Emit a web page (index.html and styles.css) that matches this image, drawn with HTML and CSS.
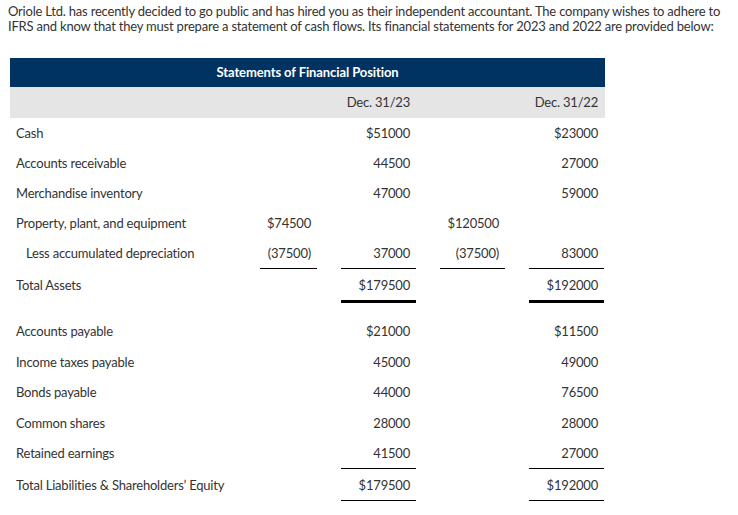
FILE: index.html
```html
<!DOCTYPE html>
<html>
<head>
<meta charset="utf-8">
<link rel="stylesheet" href="styles.css">
</head>
<body>
<p class="intro">Oriole Ltd. has recently decided to go public and has hired you as their independent accountant. The company wishes to adhere to IFRS and know that they must prepare a statement of cash flows. Its financial statements for 2023 and 2022 are provided below:</p>
<div class="sheet">
  <div class="title">Statements of Financial Position</div>
  <div class="row head">
    <div class="c lbl"></div><div class="c n2"></div><div class="c n3">Dec. 31/23</div><div class="c n4"></div><div class="c n5">Dec. 31/22</div>
  </div>
  <div class="row"><div class="c lbl">Cash</div><div class="c n2"></div><div class="c n3">$51000</div><div class="c n4"></div><div class="c n5">$23000</div></div>
  <div class="row"><div class="c lbl">Accounts receivable</div><div class="c n2"></div><div class="c n3">44500</div><div class="c n4"></div><div class="c n5">27000</div></div>
  <div class="row"><div class="c lbl">Merchandise inventory</div><div class="c n2"></div><div class="c n3">47000</div><div class="c n4"></div><div class="c n5">59000</div></div>
  <div class="row"><div class="c lbl">Property, plant, and equipment</div><div class="c n2">$74500</div><div class="c n3"></div><div class="c n4">$120500</div><div class="c n5"></div></div>
  <div class="row"><div class="c lbl indent">Less accumulated depreciation</div><div class="c n2 ul">(37500)</div><div class="c n3 ul">37000</div><div class="c n4 ul">(37500)</div><div class="c n5 ul">83000</div></div>
  <div class="row"><div class="c lbl">Total Assets</div><div class="c n2"></div><div class="c n3 dul">$179500</div><div class="c n4"></div><div class="c n5 dul">$192000</div></div>
  <div class="spacer"></div>
  <div class="row lower"><div class="c lbl">Accounts payable</div><div class="c n2"></div><div class="c n3">$21000</div><div class="c n4"></div><div class="c n5">$11500</div></div>
  <div class="row lower"><div class="c lbl">Income taxes payable</div><div class="c n2"></div><div class="c n3">45000</div><div class="c n4"></div><div class="c n5">49000</div></div>
  <div class="row lower"><div class="c lbl">Bonds payable</div><div class="c n2"></div><div class="c n3">44000</div><div class="c n4"></div><div class="c n5">76500</div></div>
  <div class="row lower"><div class="c lbl">Common shares</div><div class="c n2"></div><div class="c n3">28000</div><div class="c n4"></div><div class="c n5">28000</div></div>
  <div class="row lower"><div class="c lbl">Retained earnings</div><div class="c n2"></div><div class="c n3 ul">41500</div><div class="c n4"></div><div class="c n5 ul">27000</div></div>
  <div class="row lower"><div class="c lbl">Total Liabilities &amp; Shareholders’ Equity</div><div class="c n2"></div><div class="c n3 dul">$179500</div><div class="c n4"></div><div class="c n5 dul">$192000</div></div>
</div>
</body>
</html>
```
FILE: styles.css
```css
html, body {
  margin: 0;
  padding: 0;
  background: #ffffff;
}
body {
  padding: 0 8px;
  font-family: Lato, "Open Sans", sans-serif;
  color: #333333;
  font-size: 13px;
}
.intro {
  margin: 4px -8px 0 0;
  line-height: 15px;
  font-size: 13px;
  letter-spacing: -0.2px;
  color: #333333;
}
.sheet {
  width: 595px;
  margin: 24px 0 0 2px;
}
.title {
  background: #003262;
  color: #ffffff;
  font-weight: bold;
  text-align: center;
  height: 29px;
  line-height: 29px;
  font-size: 13px;
  letter-spacing: -0.1px;
}
.row {
  display: grid;
  grid-template-columns: 226px 57px 75px 65px 75px;
  column-gap: 24px;
  height: 30px;
}
.row.lower {
  height: 30.6px;
}
.row.head {
  background: #e5e5e5;
  height: 31px;
}
.c {
  line-height: 30px;
  font-size: 13px;
  letter-spacing: -0.2px;
  text-align: right;
  padding-right: 6px;
  white-space: nowrap;
}
.c.lbl {
  text-align: left;
  padding-left: 6px;
  padding-right: 0;
}
.c.indent {
  padding-left: 16px;
}
.c.ul {
  border-bottom: 1.5px solid #000000;
  height: 30px;
}
.row:has(.ul) {
  height: 32px;
}
.c.dul {
  border-bottom: 3px solid #000000;
}
.spacer {
  height: 16px;
}
```
